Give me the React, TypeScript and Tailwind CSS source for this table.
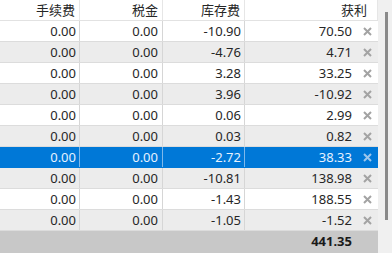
import React from "react";

const rows = [
  ["0.00", "0.00", "-10.90", "70.50"],
  ["0.00", "0.00", "-4.76", "4.71"],
  ["0.00", "0.00", "3.28", "33.25"],
  ["0.00", "0.00", "3.96", "-10.92"],
  ["0.00", "0.00", "0.06", "2.99"],
  ["0.00", "0.00", "0.03", "0.82"],
  ["0.00", "0.00", "-2.72", "38.33"],
  ["0.00", "0.00", "-10.81", "138.98"],
  ["0.00", "0.00", "-1.43", "188.55"],
  ["0.00", "0.00", "-1.05", "-1.52"],
];

function X({ sel }: { sel: boolean }) {
  return (
    <svg width="9" height="9" viewBox="0 0 9 9" className="shrink-0">
      <path
        d="M1 1 L8 8 M8 1 L1 8"
        stroke={sel ? "#9cc6ec" : "#a3a3a3"}
        strokeWidth="2"
        strokeLinecap="butt"
      />
    </svg>
  );
}

export default function App() {
  return (
    <div
      className="flex w-[392px] h-[253px] overflow-hidden bg-white text-[13px] text-[#262626]"
      style={{ fontFamily: '"Noto Sans", "Noto Sans CJK SC", sans-serif' }}
    >
      <div className="flex flex-col w-[378px]">
        <div className="grid grid-cols-[80px_83px_82px_133px] h-[21px] border-b border-[#e2e2e2] bg-white leading-[20px]">
          <div className="text-right pr-[4px] border-r border-[#e6e6e6]">手续费</div>
          <div className="text-right pr-[4px] border-r border-[#e6e6e6]">税金</div>
          <div className="text-right pr-[4px] border-r border-[#e6e6e6]">库存费</div>
          <div className="text-right pr-[10px] border-r border-[#e6e6e6]">获利</div>
        </div>
        {rows.map((r, i) => {
          const sel = i === 6;
          const bg = sel ? "bg-[#0078d7]" : i % 2 === 1 ? "bg-[#ececec]" : "bg-white";
          const txt = sel ? "text-[#e6f2ff]" : "";
          const bc = sel ? "border-[#7fb8ea]" : "border-[#d6d6d6]";
          return (
            <div
              key={i}
              className={`grid grid-cols-[80px_83px_82px_133px] h-[21px] leading-[20px] border-b ${sel ? "border-[#0078d7]" : "border-[#dcdcdc]"} ${bg} ${txt}`}
            >
              <div className={`text-right pr-[3px] border-r ${bc}`}>{r[0]}</div>
              <div className={`text-right pr-[4px] border-r ${bc}`}>{r[1]}</div>
              <div className={`text-right pr-[3px] border-r ${bc}`}>{r[2]}</div>
              <div className="flex items-center justify-end pr-[6px]">
                <span>{r[3]}</span>
                <span className="ml-[11px] flex items-center">
                  <X sel={sel} />
                </span>
              </div>
            </div>
          );
        })}
        <div className="flex-1 bg-[#c8c8c8] flex items-center justify-end pr-[26px] font-bold text-[#1a1a1a]">
          441.35
        </div>
      </div>
      <div className="w-[14px] bg-[#f0f0f0] flex flex-col pt-[12px] pb-[33px]">
        <div className="ml-[7px] w-[3px] flex-1 bg-[#8a8a8a]" />
      </div>
    </div>
  );
}
